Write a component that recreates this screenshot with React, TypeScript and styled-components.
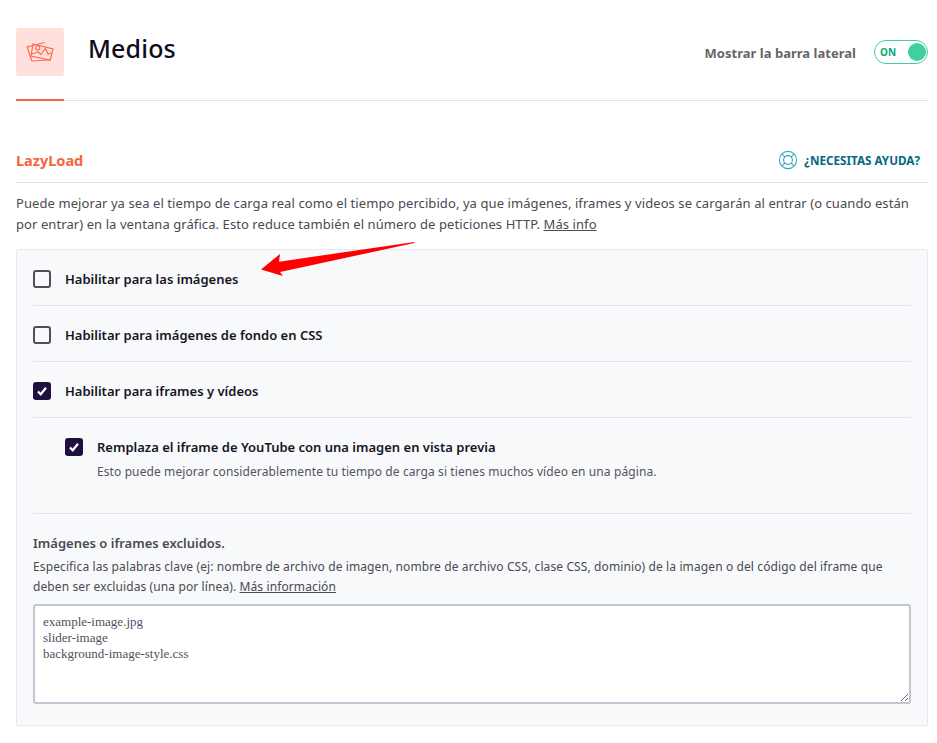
import React from 'react';
import styled, { createGlobalStyle } from 'styled-components';

const GlobalStyle = createGlobalStyle`
  * { box-sizing: border-box; }
  html, body { margin: 0; padding: 0; background: #fff; overflow: hidden; }
  body { font-family: 'Noto Sans', 'Open Sans', sans-serif; color: #1c1b2b; }
`;

const Page = styled.div`
  position: relative;
  width: 937px;
  height: 743px;
  padding: 0 9px 0 16px;
  overflow: hidden;
`;

const Header = styled.header`
  display: flex;
  align-items: flex-start;
  height: 101px;
  padding-top: 28px;
  border-bottom: 1px solid #e2e4ec;
`;

const IconTab = styled.div`
  position: relative;
  width: 48px;
  height: 48px;
  border-radius: 3px;
  background: #ffe0dc;
  display: flex;
  align-items: center;
  justify-content: center;

  &:after {
    content: '';
    position: absolute;
    left: 0;
    bottom: -25px;
    width: 48px;
    height: 2px;
    background: #f56640;
  }
`;

const Title = styled.h1`
  margin: -2px 0 0 24px;
  font-size: 25px;
  letter-spacing: 0.15px;
  line-height: 44px;
  font-weight: 500;
  color: #0e0c1d;
`;

const SidebarToggle = styled.div`
  margin-left: auto;
  display: flex;
  align-items: center;
  gap: 18px;
  margin-top: 12px;
`;

const ToggleLabel = styled.span`
  margin-top: 2px;
  font-size: 13px;
  letter-spacing: 0.02px;
  font-weight: 700;
  color: #666569;
`;

const Switch = styled.div`
  width: 54px;
  height: 24px;
  border: 1px solid #40cf9f;
  border-radius: 12px;
  display: flex;
  align-items: center;
  justify-content: space-between;
  padding: 0 1px 0 5px;
  font-size: 10px;
  font-weight: 700;
  color: #07a77c;
`;

const Knob = styled.span`
  width: 18px;
  height: 18px;
  border-radius: 50%;
  background: #40cf9f;
`;

const SectionHead = styled.div`
  display: flex;
  align-items: center;
  justify-content: space-between;
  height: 82px;
  padding: 37px 8px 0 0;
  border-bottom: 1px solid #e2e4ec;
`;

const SectionTitle = styled.h2`
  margin: 0;
  font-size: 14.5px;
  font-weight: 700;
  color: #f56640;
`;

const HelpLink = styled.a`
  display: flex;
  align-items: center;
  gap: 6px;
  font-size: 11.7px;
  font-weight: 700;
  color: #04687f;
`;

const Intro = styled.p`
  margin: 10px 0 0;
  font-size: 13px;
  letter-spacing: 0.08px;
  line-height: 21px;
  color: #4a4a52;
`;

const Link = styled.a`
  color: inherit;
  text-decoration: underline;
`;

const Panel = styled.section`
  margin-top: 14px;
  height: 477px;
  padding: 0 16px;
  background: #f8f9fb;
  border: 1px solid #e8e9ee;
  border-radius: 2px;
`;

const Row = styled.div<{ $nested?: boolean }>`
  display: flex;
  align-items: flex-start;
  gap: 14px;
  padding: ${(p) => (p.$nested ? '20px 0 33px 32px' : '20px 0 17px')};
  min-height: 56px;
  border-bottom: 1px solid #e2e4ec;
`;

const Box = styled.span<{ $checked?: boolean }>`
  flex: none;
  width: 18px;
  height: 18px;
  border-radius: 3px;
  border: 2px solid ${(p) => (p.$checked ? '#1f0f3f' : '#4f4f55')};
  background: ${(p) => (p.$checked ? '#1f0f3f' : 'transparent')};
  display: flex;
  align-items: center;
  justify-content: center;
`;

const RowLabel = styled.div`
  font-size: 13px;
  line-height: 18px;
  font-weight: 600;
  color: #16151f;
`;

const RowHint = styled.div`
  margin-top: 8px;
  font-size: 12px;
  letter-spacing: 0.1px;
  line-height: 16px;
  color: #54545c;
`;

const Excluded = styled.div`
  padding-top: 20px;
`;

const ExcludedTitle = styled.div`
  font-size: 13px;
  line-height: 18px;
  font-weight: 600;
  color: #4a4a52;
`;

const ExcludedText = styled.p`
  margin: 5px 0 7px;
  font-size: 12px;
  letter-spacing: 0.11px;
  line-height: 20px;
  color: #4a4a52;
`;

const ExcludedInput = styled.textarea`
  display: block;
  width: 100%;
  height: 100px;
  padding: 8px;
  border: 2px solid #c0c7d3;
  border-radius: 3px;
  background: #fff;
  font-family: 'Liberation Serif', serif;
  font-size: 13px;
  line-height: 16px;
  color: #50505e;
  resize: vertical;
  outline: none;
`;

const Arrow = styled.svg`
  position: absolute;
  left: 255px;
  top: 235px;
`;

const CheckMark = () => (
  <svg width="12" height="12" viewBox="0 0 12 12">
    <path d="M2 6.5 L4.7 9.3 L10 2.8" fill="none" stroke="#fff" strokeWidth="2.2" />
  </svg>
);

const PhotosIcon = () => (
  <svg width="28" height="24" viewBox="0 0 28 24" fill="none" stroke="#ff6a4d" strokeWidth="1.2">
    <path d="M18.5 2.5 L1.2 7 L5.8 21 L24.2 20" />
    <path d="M7 4 L27 9 L24.2 20 L5 16 Z" />
    <circle cx="11.7" cy="8" r="2" />
    <path d="M6 14 L12 12 L15 14.5 L19.5 8.5 L22 14 L25.5 13" />
  </svg>
);

const HelpIcon = () => (
  <svg width="20" height="20" viewBox="0 0 20 20" fill="none" stroke="#3aa9c6" strokeWidth="1.1">
    <circle cx="10" cy="10" r="8.6" />
    <circle cx="10" cy="10" r="4.4" />
    <path d="M3.9 3.9 L6.9 6.9 M16.1 3.9 L13.1 6.9 M3.9 16.1 L6.9 13.1 M16.1 16.1 L13.1 13.1" />
  </svg>
);

export default function App() {
  return (
    <>
      <GlobalStyle />
      <Page>
        <Header>
          <IconTab>
            <PhotosIcon />
          </IconTab>
          <Title>Medios</Title>
          <SidebarToggle>
            <ToggleLabel>Mostrar la barra lateral</ToggleLabel>
            <Switch>
              ON
              <Knob />
            </Switch>
          </SidebarToggle>
        </Header>

        <SectionHead>
          <SectionTitle>LazyLoad</SectionTitle>
          <HelpLink>
            <HelpIcon />
            ¿NECESITAS AYUDA?
          </HelpLink>
        </SectionHead>

        <Intro>
          Puede mejorar ya sea el tiempo de carga real como el tiempo percibido, ya que imágenes, iframes y videos se cargarán al entrar (o cuando están
          por entrar) en la ventana gráfica. Esto reduce también el número de peticiones HTTP. <Link>Más info</Link>
        </Intro>

        <Panel>
          <Row>
            <Box />
            <RowLabel>Habilitar para las imágenes</RowLabel>
          </Row>
          <Row>
            <Box />
            <RowLabel>Habilitar para imágenes de fondo en CSS</RowLabel>
          </Row>
          <Row>
            <Box $checked>
              <CheckMark />
            </Box>
            <RowLabel>Habilitar para iframes y vídeos</RowLabel>
          </Row>
          <Row $nested>
            <Box $checked>
              <CheckMark />
            </Box>
            <div>
              <RowLabel>Remplaza el iframe de YouTube con una imagen en vista previa</RowLabel>
              <RowHint>Esto puede mejorar considerablemente tu tiempo de carga si tienes muchos vídeo en una página.</RowHint>
            </div>
          </Row>
          <Excluded>
            <ExcludedTitle>Imágenes o iframes excluidos.</ExcludedTitle>
            <ExcludedText>
              Especifica las palabras clave (ej: nombre de archivo de imagen, nombre de archivo CSS, clase CSS, dominio) de la imagen o del código del iframe que
              deben ser excluidas (una por línea). <Link>Más información</Link>
            </ExcludedText>
            <ExcludedInput
              readOnly
              value={'example-image.jpg\nslider-image\nbackground-image-style.css'}
            />
          </Excluded>
        </Panel>

        <Arrow width="170" height="50" viewBox="0 0 170 50">
          <path d="M6 34.5 L25 19 L24 26.7 L159.3 7 L159.3 8 L25 37 L28 41 Z" fill="#ff0000" />
        </Arrow>
      </Page>
    </>
  );
}
